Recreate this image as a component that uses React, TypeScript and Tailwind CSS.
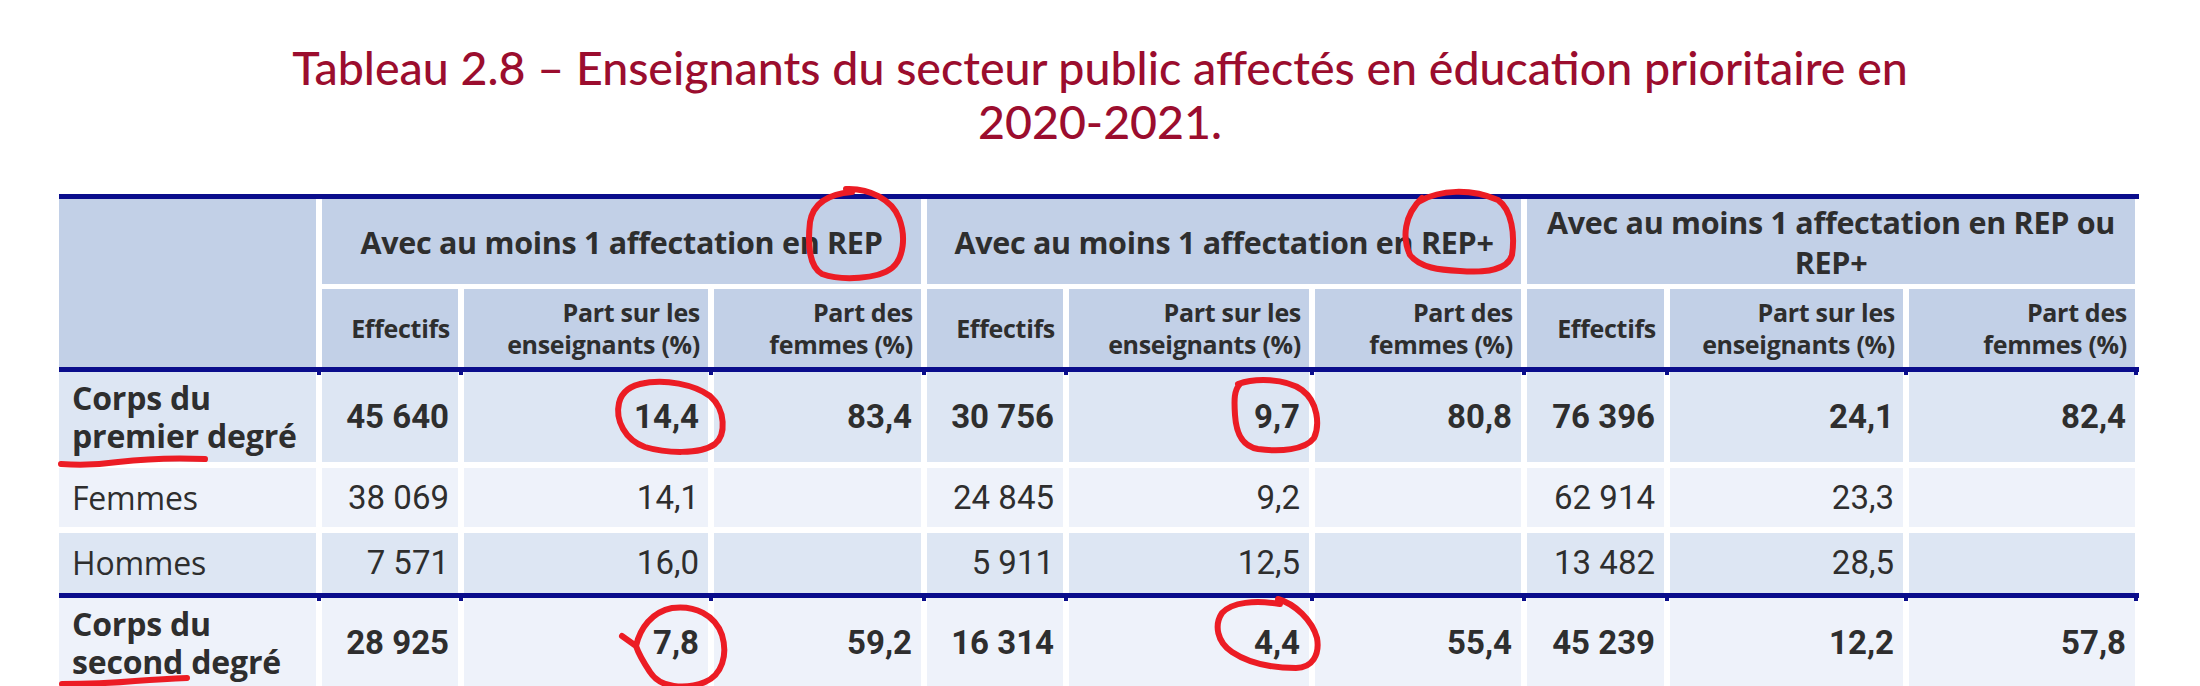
import React from "react";

type Row = {
  label: string[];
  bold: boolean;
  bg: string;
  h: string;
  vals: string[];
};

const grid =
  "grid grid-cols-[257px_136px_244px_207px_136px_240px_206px_137px_233px_226px] gap-x-[6px]";

// x of the white gaps between columns, from the table's left edge
const gapTicks = [259, 401, 651, 864, 1006, 1252, 1464, 1607, 1846, 2076];

const groups = [
  ["Avec au moins 1 affectation en REP"],
  ["Avec au moins 1 affectation en REP+"],
  ["Avec au moins 1 affectation en REP ou", "REP+"],
];

const subHeads = [
  ["Effectifs"],
  ["Part sur les", "enseignants (%)"],
  ["Part des", "femmes (%)"],
];

const firstRows: Row[] = [
  {
    label: ["Corps du", "premier degré"],
    bold: true,
    bg: "bg-[#dde6f3]",
    h: "h-[90px]",
    vals: ["45 640", "14,4", "83,4", "30 756", "9,7", "80,8", "76 396", "24,1", "82,4"],
  },
  {
    label: ["Femmes"],
    bold: false,
    bg: "bg-[#eef2fa]",
    h: "h-[59px]",
    vals: ["38 069", "14,1", "", "24 845", "9,2", "", "62 914", "23,3", ""],
  },
  {
    label: ["Hommes"],
    bold: false,
    bg: "bg-[#dde6f3]",
    h: "h-[60px]",
    vals: ["7 571", "16,0", "", "5 911", "12,5", "", "13 482", "28,5", ""],
  },
];

const secondRow: Row = {
  label: ["Corps du", "second degré"],
  bold: true,
  bg: "bg-[#eef2fa]",
  h: "h-[90px]",
  vals: ["28 925", "7,8", "59,2", "16 314", "4,4", "55,4", "45 239", "12,2", "57,8"],
};

const BlueLine = ({ ticks }: { ticks?: boolean }) => (
  <div className="relative h-[5px] w-[2080px] bg-[#0a0d8c]">
    {ticks &&
      gapTicks.map((x) => (
        <div key={x} className="absolute top-full h-[3px] w-[4px] bg-[#0a0d8c]" style={{ left: x - 1 }} />
      ))}
  </div>
);

const TableRow = ({ row }: { row: Row }) => (
  <div className={`${grid} ${row.h}`}>
    <div
      className={`${row.bg} flex flex-col justify-center pl-[13px] font-['Open_Sans',sans-serif] text-[32px] leading-[38px] tracking-[-0.2px] text-[#2e2e2e] ${
        row.bold ? "font-bold" : ""
      }`}
    >
      {row.label.map((l) => (
        <div key={l} className="h-[38px]">
          {l}
        </div>
      ))}
    </div>
    {row.vals.map((v, i) => (
      <div
        key={i}
        className={`${row.bg} flex items-center justify-end pr-[9px] font-['Roboto',sans-serif] text-[33px] text-[#2e2e2e] ${
          row.bold ? "font-bold" : ""
        }`}
      >
        {v}
      </div>
    ))}
  </div>
);

// red pen marks drawn over the table
const Marks = () => (
  <svg
    className="absolute left-0 top-0 pointer-events-none"
    width="2200"
    height="686"
    viewBox="0 0 2200 686"
    fill="none"
    stroke="#ec1c24"
    strokeWidth="6"
    strokeLinecap="round"
    strokeLinejoin="round"
  >
    <path d="M846 189 C870 188 892 200 899 218 C906 236 904 258 892 268 C878 279 842 281 822 274 C808 266 808 240 810 222 C813 204 828 194 852 192" />
    <path d="M1420 201 C1440 190 1470 188 1498 200 C1512 210 1515 235 1512 255 C1508 270 1485 273 1460 271 C1440 270 1420 268 1410 255 C1402 238 1404 215 1422 198" />
    <path d="M640 384 C665 378 695 385 710 396 C726 410 726 435 715 444 C700 455 665 453 645 447 C625 440 615 420 619 403 C622 390 632 385 645 383" />
    <path d="M1238 384 C1255 378 1285 378 1302 390 C1318 402 1320 425 1314 438 C1305 450 1280 452 1258 449 C1240 446 1236 430 1235 415 C1234 400 1234 390 1240 384" />
    <path d="M622 636 L636 646 C640 628 652 612 672 608 C695 605 715 615 722 635 C728 655 722 675 705 682 C685 690 660 688 650 672 C642 660 638 652 636 646" />
    <path d="M1278 599 C1295 604 1312 620 1317 638 C1320 655 1312 668 1296 668 C1275 668 1250 664 1232 652 C1217 642 1214 625 1222 613 C1232 602 1255 600 1280 604" />
    <path d="M61 464 Q90 466 118 462 Q160 457 205 459" />
    <path d="M62 684 Q100 684 135 681 Q165 679 187 678" />
  </svg>
);

export default function App() {
  return (
    <div className="relative w-[2200px] h-[686px] overflow-hidden bg-white">
      <h1 className="pt-[40px] text-center font-['Lato',sans-serif] font-medium text-[46.5px] leading-[54px] text-[#9b0d2e]">
        Tableau 2.8 – Enseignants du secteur public affectés en éducation prioritaire en
        <br />
        2020-2021.
      </h1>

      <div className="ml-[59px] mt-[46px] w-[2076px]">
        <BlueLine />
        <div
          className={`${grid} grid-rows-[85px_78px] gap-y-[5px] font-['Open_Sans',sans-serif] font-bold text-[#2e2e2e]`}
        >
          <div className="row-span-2 bg-[#c2d0e7]" />
          {groups.map((g) => (
            <div
              key={g.join()}
              className="col-span-3 bg-[#c2d0e7] flex flex-col items-center justify-center text-center text-[30.5px] leading-[40px] tracking-[-0.3px]"
            >
              {g.map((l) => (
                <span key={l}>{l}</span>
              ))}
            </div>
          ))}
          {groups.map((g) =>
            subHeads.map((s) => (
              <div
                key={g.join() + s.join()}
                className="bg-[#c2d0e7] flex flex-col items-end justify-center pr-[8px] text-right text-[25px] leading-[32px] tracking-[-0.3px]"
              >
                {s.map((l) => (
                  <span key={l}>{l}</span>
                ))}
              </div>
            ))
          )}
        </div>
        <BlueLine ticks />
        <div className="flex flex-col gap-y-[6px]">
          {firstRows.map((r) => (
            <TableRow key={r.label.join()} row={r} />
          ))}
        </div>
        <BlueLine ticks />
        <TableRow row={secondRow} />
      </div>

      <Marks />
    </div>
  );
}
